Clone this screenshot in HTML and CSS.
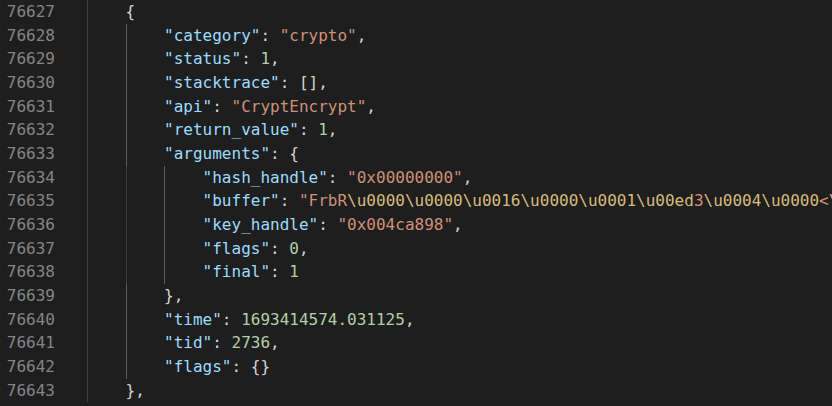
FILE: index.html
```html
<!DOCTYPE html>
<html>
<head>
<meta charset="utf-8">
<link rel="stylesheet" href="styles.css">
</head>
<body>
<div class="editor">
  <div class="gutter">
    <div class="ln">76627</div><div class="ln">76628</div><div class="ln">76629</div><div class="ln">76630</div>
    <div class="ln">76631</div><div class="ln">76632</div><div class="ln">76633</div><div class="ln">76634</div>
    <div class="ln">76635</div><div class="ln">76636</div><div class="ln">76637</div><div class="ln">76638</div>
    <div class="ln">76639</div><div class="ln">76640</div><div class="ln">76641</div><div class="ln">76642</div>
    <div class="ln">76643</div>
  </div>
  <div class="code">
    <div class="line"><span class="g"></span><span class="p">{</span></div>
    <div class="line"><span class="g"></span><span class="g act"></span><span class="k">"category"</span><span class="p">: </span><span class="s">"crypto"</span><span class="p">,</span></div>
    <div class="line"><span class="g"></span><span class="g act"></span><span class="k">"status"</span><span class="p">: </span><span class="n">1</span><span class="p">,</span></div>
    <div class="line"><span class="g"></span><span class="g act"></span><span class="k">"stacktrace"</span><span class="p">: [],</span></div>
    <div class="line"><span class="g"></span><span class="g act"></span><span class="k">"api"</span><span class="p">: </span><span class="s">"CryptEncrypt"</span><span class="p">,</span></div>
    <div class="line"><span class="g"></span><span class="g act"></span><span class="k">"return_value"</span><span class="p">: </span><span class="n">1</span><span class="p">,</span></div>
    <div class="line"><span class="g"></span><span class="g act"></span><span class="k">"arguments"</span><span class="p">: {</span></div>
    <div class="line"><span class="g"></span><span class="g"></span><span class="g act"></span><span class="k">"hash_handle"</span><span class="p">: </span><span class="s">"0x00000000"</span><span class="p">,</span></div>
    <div class="line"><span class="g"></span><span class="g"></span><span class="g act"></span><span class="k">"buffer"</span><span class="p">: </span><span class="s">"FrbR</span><span class="e">\u0000\u0000\u0016\u0000\u0001\u00ed</span><span class="s">3</span><span class="e">\u0004\u0000</span><span class="s">&lt;</span><span class="e">\"</span></div>
    <div class="line"><span class="g"></span><span class="g"></span><span class="g act"></span><span class="k">"key_handle"</span><span class="p">: </span><span class="s">"0x004ca898"</span><span class="p">,</span></div>
    <div class="line"><span class="g"></span><span class="g"></span><span class="g act"></span><span class="k">"flags"</span><span class="p">: </span><span class="n">0</span><span class="p">,</span></div>
    <div class="line"><span class="g"></span><span class="g"></span><span class="g act"></span><span class="k">"final"</span><span class="p">: </span><span class="n">1</span></div>
    <div class="line"><span class="g"></span><span class="g act"></span><span class="p">},</span></div>
    <div class="line"><span class="g"></span><span class="g act"></span><span class="k">"time"</span><span class="p">: </span><span class="n">1693414574.031125</span><span class="p">,</span></div>
    <div class="line"><span class="g"></span><span class="g act"></span><span class="k">"tid"</span><span class="p">: </span><span class="n">2736</span><span class="p">,</span></div>
    <div class="line"><span class="g"></span><span class="g act"></span><span class="k">"flags"</span><span class="p">: {}</span></div>
    <div class="line"><span class="g"></span><span class="p">},</span></div>
  </div>
</div>
</body>
</html>
```
FILE: styles.css
```css
html, body {
  margin: 0;
  padding: 0;
  background: #1e1e1e;
  overflow: hidden;
}
.editor {
  display: flex;
  width: 832px;
  height: 406px;
  background: #1e1e1e;
  font-family: "DejaVu Sans Mono", "Liberation Mono", monospace;
  font-size: 16px;
  line-height: 23.67px;
  overflow: hidden;
}
.gutter {
  width: 55px;
  flex: none;
  color: #858585;
  text-align: right;
}
.ln {
  height: 23.67px;
  white-space: pre;
}
.code {
  margin-left: 32px;
  flex: 1;
  color: #d4d4d4;
}
.line {
  height: 23.67px;
  white-space: pre;
  display: flex;
}
.g {
  display: inline-block;
  width: 4ch;
  flex: none;
  height: 100%;
  box-shadow: inset 1px 0 0 #404040;
}
.g.act {
  box-shadow: inset 1px 0 0 #5e5e5e;
}
.k { color: #9cdcfe; }
.s { color: #ce9178; }
.n { color: #b5cea8; }
.e { color: #d7ba7d; }
.p { color: #d4d4d4; }
```
